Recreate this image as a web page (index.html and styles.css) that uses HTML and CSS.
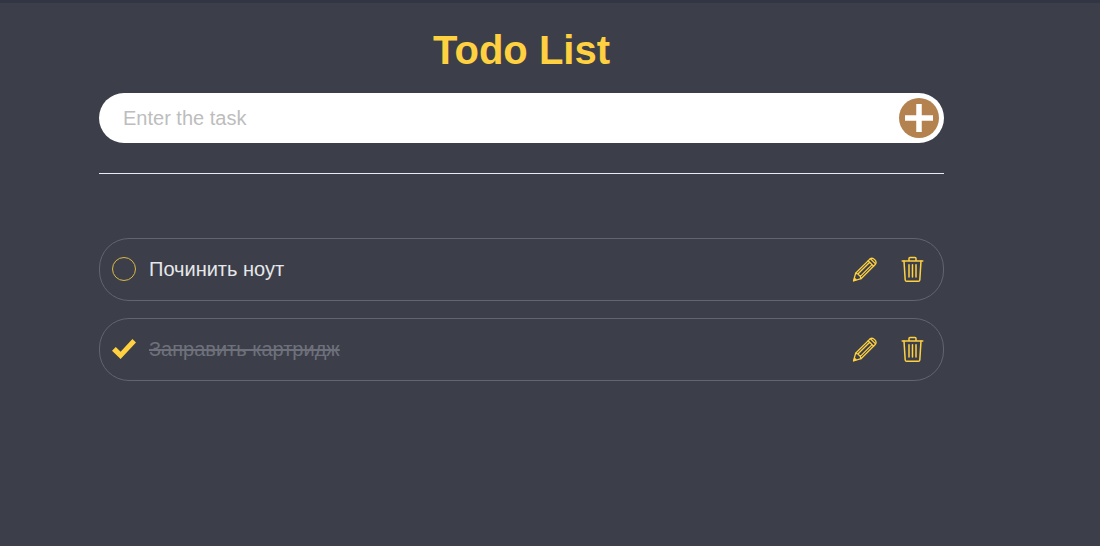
FILE: index.html
```html
<!DOCTYPE html>
<html lang="ru">
<head>
  <meta charset="utf-8">
  <meta name="viewport" content="width=device-width, initial-scale=1">
  <title>Todo List</title>
  <link rel="stylesheet" href="styles.css">
</head>
<body>
  <svg class="sprite" aria-hidden="true">
    <symbol id="pencil" viewBox="0 0 26 26">
      <g fill="none" stroke="currentColor" stroke-width="1.3" stroke-linejoin="round" stroke-linecap="round">
        <path d="M1.5 25 3.6 17.3 17.8 3.1Q20.2 1.1 22.7 3.6 25.2 6.1 23.2 8.5L9 22.7Z"/>
        <path d="M3.6 17.3 5.9 18 8.3 20.4 9 22.7M16.2 4.7 21.6 10.1M18.4 2.7 23.6 7.9M5.9 18 17.7 6.2M8.3 20.4 20.1 8.6"/>
      </g>
      <path d="M1.2 25.3 2.4 21.3 5.2 24.1Z" fill="currentColor"/>
    </symbol>
    <symbol id="trash" viewBox="0 0 26 26">
      <g fill="none" stroke="currentColor" stroke-width="1.5" stroke-linejoin="round" stroke-linecap="round">
        <path d="M2.2 5H22.8M9 5V2.5Q9 1.5 10 1.5H15Q16 1.5 16 2.5V5"/>
        <path d="M4 5 5.2 24Q5.3 25.2 6.7 25.2H18.3Q19.7 25.2 19.8 24L21 5"/>
        <path d="M9 8.8V21M12.5 8.8V21M16 8.8V21"/>
      </g>
    </symbol>
  </svg>

  <main class="todo">
    <h1 class="todo__title">Todo List</h1>

    <form class="task-form">
      <input class="task-form__input" type="text" placeholder="Enter the task" aria-label="Enter the task">
      <button class="task-form__add" type="button" aria-label="Add task">
        <svg viewBox="0 0 40 40" width="40" height="40" aria-hidden="true">
          <circle cx="20" cy="20" r="20" fill="#b4824e"/>
          <path d="M20 6V34M6 20H34" stroke="#fff" stroke-width="5.5"/>
        </svg>
      </button>
    </form>

    <ul class="tasks">
      <li class="task">
        <label class="task__label">
          <input class="task__check" type="checkbox">
          <svg class="task__mark" viewBox="0 0 24 24" aria-hidden="true">
            <circle class="task__ring" cx="12" cy="12" r="11.5"/>
            <path class="task__tick" d="M0 13.8 3.8 10 8.6 14.8 20.4 2 24 5.4 8.6 22Z"/>
          </svg>
          <span class="task__text">Починить ноут</span>
        </label>
        <button class="task__action" type="button" aria-label="Edit"><svg class="task__icon"><use href="#pencil"/></svg></button>
        <button class="task__action" type="button" aria-label="Delete"><svg class="task__icon"><use href="#trash"/></svg></button>
      </li>
      <li class="task">
        <label class="task__label">
          <input class="task__check" type="checkbox" checked>
          <svg class="task__mark" viewBox="0 0 24 24" aria-hidden="true">
            <circle class="task__ring" cx="12" cy="12" r="11.5"/>
            <path class="task__tick" d="M0 13.8 3.8 10 8.6 14.8 20.4 2 24 5.4 8.6 22Z"/>
          </svg>
          <span class="task__text">Заправить картридж</span>
        </label>
        <button class="task__action" type="button" aria-label="Edit"><svg class="task__icon"><use href="#pencil"/></svg></button>
        <button class="task__action" type="button" aria-label="Delete"><svg class="task__icon"><use href="#trash"/></svg></button>
      </li>
    </ul>
  </main>
</body>
</html>
```
FILE: styles.css
```css
* {
  box-sizing: border-box;
}

body {
  margin: 0;
  border-top: 3px solid #323644;
  background: #3c3f49;
  color: #e6e7ea;
  font: 20px/24px "Liberation Sans", Arial, sans-serif;
}

button {
  display: flex;
  padding: 0;
  border: 0;
  background: none;
  cursor: pointer;
}

.sprite {
  display: none;
}

.todo {
  padding: 24px 156px 24px 99px;
}

.todo__title {
  margin: 0 0 20px;
  color: #ffd03f;
  font-size: 40px;
  line-height: 46px;
  text-align: center;
}

.task-form {
  display: flex;
  align-items: center;
  height: 50px;
  padding: 0 5px 0 24px;
  border-radius: 25px;
  background: #fff;
}

.task-form__input {
  flex: 1;
  min-width: 0;
  padding: 0;
  border: 0;
  outline: 0;
  background: none;
  color: #3c3f49;
  font: inherit;
}

.task-form__input::placeholder {
  color: #bdbdbd;
}

.tasks {
  display: grid;
  gap: 17px;
  margin: 30px 0 0;
  padding: 64px 0 0;
  border-top: 1px solid #e9ebf2;
  list-style: none;
}

.task {
  display: flex;
  align-items: center;
  gap: 22px;
  padding: 17px 17px 18px 12px;
  border: 1px solid #62656f;
  border-radius: 30px;
}

.task__label {
  display: flex;
  flex: 1;
  align-items: center;
  gap: 13px;
  cursor: pointer;
}

.task__check {
  position: absolute;
  opacity: 0;
}

.task__mark {
  width: 24px;
  height: 24px;
}

.task__ring {
  fill: none;
  stroke: #dcb944;
}

.task__tick {
  display: none;
  fill: #ffd03f;
}

.task__check:checked + .task__mark .task__ring {
  display: none;
}

.task__check:checked + .task__mark .task__tick {
  display: block;
}

.task__check:checked ~ .task__text {
  color: #6e717b;
  text-decoration: line-through;
}

.task__action {
  color: #ffd03f;
}

.task__icon {
  width: 26px;
  height: 26px;
}
```
